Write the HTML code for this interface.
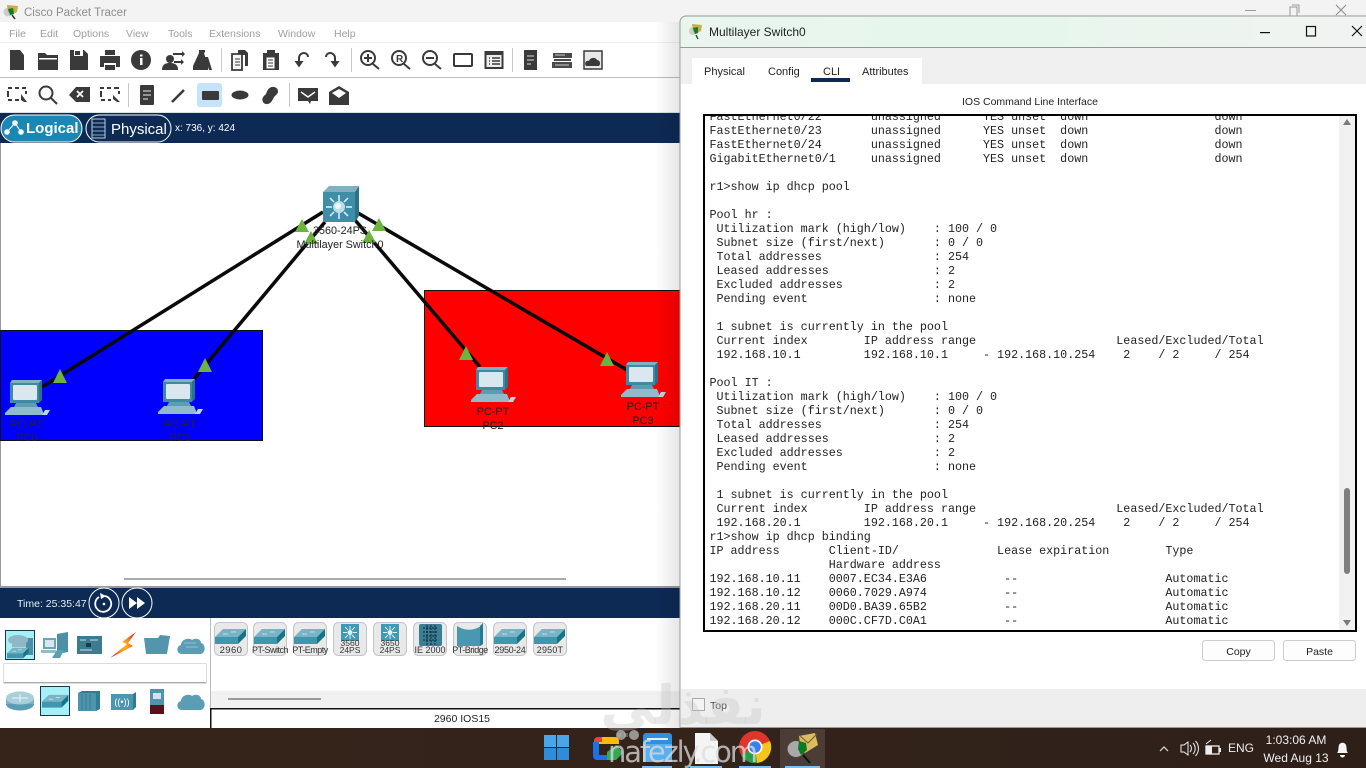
<!DOCTYPE html>
<html><head><meta charset="utf-8"><style>
html,body{margin:0;padding:0;width:1366px;height:768px;overflow:hidden;background:#fff}
svg{position:absolute;left:0;top:0;font-family:"Liberation Sans",sans-serif}
#cli{position:absolute;left:706px;top:116px;width:632px;height:514px;overflow:hidden}
#cli pre{position:absolute;left:3.500px;top:-6px;margin:0;font:11.7px/14px "Liberation Mono",monospace;color:#222}
</style></head><body>
<svg width="1366" height="768" viewBox="0 0 1366 768">
<defs>
<linearGradient id="sh" x1="0" x2="1"><stop offset="0" stop-color="#000" stop-opacity="0"/><stop offset="1" stop-color="#000" stop-opacity=".1"/></linearGradient>
<linearGradient id="tb" x1="0" x2="1"><stop offset="0" stop-color="#e9f5ee"/><stop offset=".5" stop-color="#e6f6ec"/><stop offset="1" stop-color="#f1f3f2"/></linearGradient>
<linearGradient id="task" x1="0" x2="1"><stop offset="0" stop-color="#36241a"/><stop offset=".5" stop-color="#33231b"/><stop offset="1" stop-color="#2e2019"/></linearGradient>
<radialGradient id="bolt"><stop offset="0" stop-color="#ffd21a"/><stop offset=".5" stop-color="#fb8a1a"/><stop offset="1" stop-color="#e8391a"/></radialGradient>
<g id="pc">
<path d="M5 3l2-3h30l-3 3z" fill="#7fb1c2"/>
<path d="M5 3h29v20H5z" fill="#3f8aa3"/><path d="M34 3l3-3v20l-3 3z" fill="#2b7187"/>
<rect x="8" y="5" width="24" height="15" rx="1" fill="#d8e8ee"/>
<path d="M11 23h20l2 4H9z" fill="#5d9cb2"/><path d="M6 27h30l2 5v3H0v-2z" fill="#8fbccd"/>
<path d="M37 35l3-5h5l-3 5z" fill="#b9d8e2"/>
</g>
<g id="sw">
<path d="M0 9L8 1h23l-8 8z" fill="#7ab3c4"/><path d="M0 9h23v7H0z" fill="#3e97ae"/><path d="M23 9l8-8v7l-8 8z" fill="#167488"/>
<path d="M8 6h5M16 4h5" stroke="#d8ecf2" stroke-width=".8"/>
</g>
<g id="ml">
<path d="M0 6L6 0h30l-4 6z" fill="#7fb1c2"/><path d="M32 6l4-6v30l-4 6z" fill="#2c7187"/>
<rect x="0" y="6" width="32" height="30" fill="#3f8ea8"/>
<g stroke="#e6f3f7" stroke-width="1.500"><path d="M16 9v6M16 27v6M3 21h6M23 21h6M7 12l4 4M25 12l-4 4M7 30l4-4M25 30l-4-4"/></g>
<circle cx="16" cy="21" r="6" fill="#bfdde6"/><circle cx="15" cy="20" r="3" fill="#eff8fb"/>
</g>
<g id="ml2">
<rect x="5" y="0" width="18" height="17" fill="#3f9ab5"/>
<g stroke="#e6f3f7" stroke-width="1"><path d="M14 2v4M14 11v4M7 8.500h4M17 8.500h4M9 3l3 3M19 3l-3 3M9 14l3-3M19 14l-3-3"/></g>
<circle cx="14" cy="8.500" r="2.500" fill="#dff0f5"/>
</g>
<g id="cld">
<path d="M5 19C-1 19-1 11 4 10c0-5 7-8 11-5 5-3 9 0 9 3 5 1 5 11-1 11z" fill="#5b9db4"/>
</g>
<g id="tile"><rect x=".5" y=".5" width="33" height="33" rx="5" fill="#e9e9e9" stroke="#c6c6c6"/></g>
</defs>

<rect width="1366" height="768" fill="#fff"/>
<rect width="1366" height="22" fill="#f3f3f3"/>
<rect y="42" width="680" height="1" fill="#eee"/>
<g transform="translate(3,3)"><circle cx="5" cy="9" r="4.500" fill="#ccc"/><path d="M4 2l11 1-1 6-6 3-3-3z" fill="#c9ad4c"/><path d="M5 6l5-1 1 6-4 1z" fill="#137a28"/><path d="M9 12l3 4" stroke="#333" stroke-width="1.500"/></g>
<text x="24" y="16" font-size="11.500" fill="#8d8d8d">Cisco Packet Tracer</text>
<g font-size="10.500" fill="#9e9e9e">
<text x="9" y="37">File</text><text x="40" y="37">Edit</text><text x="73" y="37">Options</text><text x="126" y="37">View</text><text x="168" y="37">Tools</text><text x="209" y="37">Extensions</text><text x="278" y="37">Window</text><text x="334" y="37">Help</text>
</g>
<rect y="77" width="680" height="1" fill="#bdbdbd"/>
<rect y="112" width="680" height="1" fill="#d8e2e8"/>

<g fill="#3a3a3a">
<path d="M10 50h10l4 5v15H10z"/>
<path d="M38 53h7l2 2h11v15H38z"/><rect x="39" y="58" width="18" height="1.500" fill="#fff"/>
<path d="M70 50h14l4 4v16H70z"/><rect x="74" y="50" width="9" height="6" fill="#fff"/><rect x="75" y="51" width="5" height="4"/>
<path d="M105 50h10v5h-10zM100 56h20v11h-4v-4h-12v4h-4zM105 65h10v5h-10z"/>
<circle cx="141" cy="60" r="10"/><rect x="140" y="58" width="2.500" height="7" fill="#fff"/><rect x="140" y="54.500" width="2.500" height="2" fill="#fff"/>
<circle cx="170" cy="59" r="4"/><path d="M162 70c0-6 4-7 8-7s8 1 8 7z"/><path d="M173 53h9v-2l3 3-3 3v-2h-9zM174 61h7v-2l3 3-3 3v-2h-7z"/>
<path d="M199 50h6v2l-1 1 4 13v4h-15v-4l6-13zM205 57l3 0 4 13h-3z"/>
<path d="M238 50h7l3 3v13h-3V55h-7z"/><path d="M232 54h10v16h-10z" fill="#f5f5f5" stroke="#3a3a3a" stroke-width="1.800"/><path d="M235 59h5M235 62h5M235 65h5" stroke="#3a3a3a"/>
<path d="M263 53h4v-3h8v3h4v17h-16z"/><rect x="266" y="57" width="9" height="12" fill="#fff" stroke="#3a3a3a"/><path d="M268 60h5M268 63h5M268 66h5" stroke="#3a3a3a"/>
</g>
<path d="M299 62V58a5 5 0 0 1 5-5c2 0 4 1.500 4 4" fill="none" stroke="#3a3a3a" stroke-width="2"/><path d="M294.500 61h9l-4.500 6.500z" fill="#3a3a3a"/>
<path d="M335 62V58a5 5 0 0 0-5-5c-2 0-4 1.500-4 4" fill="none" stroke="#3a3a3a" stroke-width="2"/><path d="M330.500 61h9l-4.500 6.500z" fill="#3a3a3a"/>
<rect x="221" y="48" width="1" height="24" fill="#c8c8c8"/><rect x="351" y="48" width="1" height="24" fill="#c8c8c8"/><rect x="512" y="48" width="1" height="24" fill="#c8c8c8"/>
<g fill="none" stroke="#3a3a3a" stroke-width="2">
<circle cx="368" cy="58" r="7"/><path d="M373 64l6 5"/><path d="M364 58h8M368 54v8"/>
<circle cx="399" cy="58" r="7"/><path d="M404 64l6 5"/>
<circle cx="430" cy="58" r="7"/><path d="M435 64l6 5"/><path d="M426 58h8"/>
<rect x="454" y="54" width="18" height="12" rx="1"/>
</g>
<text x="396" y="62" font-size="10" font-weight="700" fill="#3a3a3a">R</text>
<rect x="484.500" y="51" width="19" height="18" fill="#3a3a3a"/><rect x="486.500" y="55" width="15" height="12" fill="#eee"/><path d="M489 58h1M489 61h1M489 64h1M492 58h8M492 61h8M492 64h8" stroke="#3a3a3a" stroke-width="1.500"/>
<rect x="524" y="50" width="13" height="20" fill="#3a3a3a"/><path d="M527 56h7M527 60h7M527 64h4" stroke="#ddd"/>
<path d="M553 53h19v5h-19zM554 59h17v2h-17zM552 62h20v6h-20z" fill="#4a4a4a"/><path d="M555 55h10M555 65h14" stroke="#ccc"/>
<rect x="584" y="51" width="18" height="18" fill="#e8e8e8" stroke="#3a3a3a" stroke-width="1.500"/><path d="M586 66c-2-3 0-6 3-5 1-4 7-4 8-1 3 0 4 4 2 6z" fill="#3a3a3a"/>

<g fill="none" stroke="#3a3a3a" stroke-width="2">
<path d="M8 88h4M15 88h4M22 88h4M8 100h4M15 100h4M8 91v6M26 91v3"/><path d="M100 88h4M107 88h4M114 88h5M101 100h4M108 100h3M101 91v6M119 91v3"/>
<circle cx="46" cy="93" r="6.500"/><path d="M51 98l6 6"/>
<path d="M172 102l12-12" stroke-width="2.500"/>
</g>
<path d="M21 94l6 8-3 0-3-2z" fill="#3a3a3a"/><path d="M113 95l7 7-3 0-4-3z" fill="#3a3a3a"/>
<path d="M76 87h14v15H76l-7-7z" fill="#3a3a3a"/><path d="M77 91l6 6M83 91l-6 6" stroke="#fff" stroke-width="1.800"/>
<rect x="128" y="83" width="1" height="24" fill="#c8c8c8"/><rect x="289" y="83" width="1" height="24" fill="#c8c8c8"/>
<rect x="140" y="85" width="14" height="20" rx="1" fill="#3a3a3a"/><path d="M143 91h8M143 95h8M143 99h5" stroke="#eee"/>
<rect x="197" y="83" width="25" height="24" rx="3" fill="#c6e4f9"/><rect x="202" y="91" width="17" height="9" rx="1" fill="#3a3a3a"/>
<ellipse cx="240" cy="95" rx="8.500" ry="4.500" fill="#3a3a3a"/>
<path d="M263 102c-2-4 1-6 3-8 1-3 3-8 8-7 5 1 5 6 2 8-3 2-3 6-6 8-3 2-6 1-7-1z" fill="#3a3a3a"/>
<path d="M298 88h20v13h-7l-1 3-2-3h-10z" fill="#3a3a3a"/><path d="M301 92l7 5 7-5" fill="none" stroke="#fff" stroke-width="1.500"/>
<path d="M329 92l10-6 10 6v13h-20z" fill="#3a3a3a"/><path d="M332 93l7-4 7 4-7 5z" fill="#fff"/>

<rect y="113" width="680" height="30" fill="#0d2a55"/>
<rect x="1" y="115" width="81" height="27" rx="13.500" fill="#1b87b4" stroke="#fff"/>
<rect x="86" y="115" width="85" height="27" rx="13.500" fill="#0d2a55" stroke="#fff"/>
<g fill="#fff"><circle cx="15" cy="123" r="2.800"/><circle cx="7" cy="132" r="2.800"/><circle cx="21" cy="132" r="2.800"/></g><path d="M15 123l-8 9M15 123l6 9" stroke="#fff"/>
<text x="26" y="133" font-size="15" font-weight="700" fill="#fff">Logical</text>
<rect x="92" y="119" width="13" height="19" fill="none" stroke="#bcd"/><path d="M92 123h13M92 127h13M92 131h13M92 135h13" stroke="#bcd" stroke-width=".7"/>
<text x="111" y="134" font-size="15" fill="#fff">Physical</text>
<text x="175" y="131" font-size="10" fill="#fff">x: 736, y: 424</text>

<rect y="143" width="680" height="444" fill="#fff"/>
<rect y="143" width="1" height="444" fill="#999"/>
<rect x=".5" y="330.500" width="262" height="110" fill="#00f" stroke="#111"/>
<rect x="424.500" y="290.500" width="262" height="136" fill="#f00" stroke="#111"/>
<g stroke="#0a0a0a" stroke-width="3.500" fill="none">
<path d="M323 212L42 387"/><path d="M325 222L193 380"/><path d="M355 220L480 367"/><path d="M358 213L627 370"/>
</g>
<use href="#pc" x="5" y="380"/><use href="#pc" x="158" y="379"/><use href="#pc" x="471" y="367"/><use href="#pc" x="621" y="362"/>
<use href="#ml" x="323" y="186"/>
<g fill="#6db33f">
<path d="M302 219l7 13h-14z"/><path d="M311 231l7 13h-14z"/><path d="M379 218l7 13h-14z"/><path d="M369 230l7 13h-14z"/>
<path d="M60 369l7 14h-14z"/><path d="M205 358l7 14h-14z"/><path d="M466 346l7 14h-14z"/><path d="M607 352l7 14h-14z"/>
</g>
<g font-size="10.800" fill="#222" text-anchor="middle">
<text x="340" y="234">3560-24PS</text><text x="340" y="248">Multilayer Switch0</text>
<text x="27" y="428">PC-PT</text><text x="27" y="441">PC0</text>
<text x="180" y="428">PC-PT</text><text x="180" y="441">PC1</text>
<text x="493" y="415">PC-PT</text><text x="493" y="429">PC2</text>
<text x="643" y="410">PC-PT</text><text x="643" y="424">PC3</text>
</g>
<rect x="124" y="578" width="442" height="2" fill="#aaa"/>
<rect y="586" width="680" height="2" fill="#999"/>

<rect y="588" width="680" height="30" fill="#0d2a55"/>
<text x="17" y="607" font-size="10.500" fill="#e8eef5">Time: 25:35:47</text>
<circle cx="104" cy="603" r="15" fill="none" stroke="#fff"/><circle cx="137" cy="603" r="15" fill="none" stroke="#fff"/>
<path d="M99 597a8 8 0 1 0 6-1" fill="none" stroke="#fff" stroke-width="1.800"/><path d="M100 593l6 3-5 3z" fill="#fff"/><circle cx="104" cy="604" r="1.300" fill="#fff"/>
<path d="M129 597l8 6-8 6zM137 597l8 6-8 6z" fill="#fff"/>

<rect x="210" y="618" width="1" height="110" fill="#bbb"/>
<rect x="5.500" y="630.500" width="29" height="29" fill="#a4f0f6" stroke="#143a50"/>
<rect x="26" y="638" width="7" height="17" fill="#4d8fa6"/>
<ellipse cx="18" cy="640" rx="10" ry="5" fill="#8fb8c6"/><rect x="12" y="642" width="14" height="5" fill="#8fb8c6"/>
<use href="#sw" transform="translate(7,647) scale(.7,.7)"/>
<rect x="43" y="638" width="13" height="11" fill="#6fa4b6"/><rect x="45" y="640" width="9" height="7" fill="#d8e8ee"/><path d="M41 650h15v3H41z" fill="#8fbccd"/>
<path d="M57 634l11-2v20l-11 2z" fill="#4d8fa6"/><path d="M52 658l5-8h7l-4 8z" fill="#5d9cb2"/>
<rect x="77" y="636" width="25" height="18" fill="#3c7c90"/><path d="M80 640h6M90 640h8M80 650h12" stroke="#c8e0e8"/><rect x="86" y="643" width="5" height="4" fill="#1b3a48"/>
<path d="M136 632l-14 10 5 2-17 14 23-12-5-3z" fill="url(#bolt)"/>
<path d="M144 638h14l2-3 10 1-3 18h-21z" fill="#5595ab"/>
<use href="#cld" transform="translate(177,635)"/><path d="M184 643h12M186 647h12" stroke="#8ec1d1"/>
<rect x="3.500" y="663.500" width="203" height="20" rx="1" fill="#fff" stroke="#ddd"/><rect x="4" y="682" width="202" height="1" fill="#aaa"/>
<ellipse cx="20" cy="704" rx="14" ry="6.500" fill="#5b9db4"/><rect x="6" y="698" width="28" height="6" fill="#7ab0c2"/><ellipse cx="20" cy="698" rx="14" ry="6.500" fill="#a9cfdb"/><path d="M12 698h16M20 694v8" stroke="#eaf5f8"/>
<rect x="40.500" y="686.500" width="29" height="29" fill="#a4f0f6" stroke="#143a50"/><use href="#sw" transform="translate(42,694) scale(.85,.85)"/>
<rect x="78" y="693" width="18" height="18" fill="#4d95ad"/><path d="M96 693l4-2v18l-4 2zM78 693l4-2h18l-4 2z" fill="#2f7c93"/><path d="M82 694v16M86 694v16M90 694v16" stroke="#387d94"/>
<rect x="111" y="694" width="22" height="16" fill="#4b97ae"/><path d="M133 694l3-2v15l-3 3z" fill="#2f7c93"/><text x="122" y="705" font-size="9" fill="#fff" text-anchor="middle">((•))</text>
<rect x="150" y="689" width="14" height="16" fill="#4d95ad"/><rect x="150" y="705" width="14" height="9" fill="#58101a"/><rect x="153" y="693" width="8" height="6" fill="#dde"/>
<use href="#cld" transform="translate(177,691)"/>

<use href="#tile" x="214" y="622"/><use href="#tile" x="253" y="622"/><use href="#tile" x="293" y="622"/><use href="#tile" x="333" y="622"/><use href="#tile" x="373" y="622"/><use href="#tile" x="413" y="622"/><use href="#tile" x="453" y="622"/><use href="#tile" x="493" y="622"/><use href="#tile" x="533" y="622"/>
<use href="#sw" x="215" y="628"/><use href="#sw" x="254" y="628"/><use href="#sw" x="294" y="628"/>
<use href="#ml2" x="336" y="624"/><use href="#ml2" x="376" y="624"/>
<rect x="419" y="624" width="23" height="22" rx="2" fill="#3a7f96"/><path d="M423 628h15M423 632h15M423 636h15M423 640h15M427 625v20M431 625v20M435 625v20" stroke="#123" stroke-dasharray="2 1"/>
<path d="M457 626c8 5 16 5 24 0l2-2v20l-3 2h-23z" fill="#4a98b0"/><path d="M480 626l3-3v21l-3 2z" fill="#217d95"/>
<use href="#sw" x="494" y="628"/><use href="#sw" x="534" y="628"/>
<g font-size="9" fill="#333" text-anchor="middle">
<text x="231" y="653" font-size="9.500" letter-spacing=".4">2960</text>
<text x="270" y="653" letter-spacing="-.5">PT-Switch</text>
<text x="310" y="653" letter-spacing="-.5">PT-Empty</text>
<text x="350" y="646" font-size="8.500">3560</text><text x="350" y="653" font-size="8.500">24PS</text>
<text x="390" y="646" font-size="8.500">3650</text><text x="390" y="653" font-size="8.500">24PS</text>
<text x="430" y="653">IE 2000</text>
<text x="470" y="653" letter-spacing="-.5">PT-Bridge</text>
<text x="510" y="653" letter-spacing="-.3">2950-24</text>
<text x="550" y="653" letter-spacing=".2">2950T</text>
</g>
<rect x="211" y="691" width="469" height="17" fill="#f1f1f1"/>
<rect x="228" y="698" width="93" height="2" fill="#9a9a9a"/>
<rect x="210" y="708" width="470" height="1.500" fill="#111"/>
<rect x="210" y="708" width="1.500" height="20" fill="#111"/>
<text x="462" y="722" font-size="10.500" fill="#222" text-anchor="middle">2960 IOS15</text>

<rect x="1245" y="10" width="11" height="1" fill="#999"/>
<rect x="1290" y="7" width="7" height="9" fill="none" stroke="#999"/><path d="M1292 5h7v8" fill="none" stroke="#999"/>
<path d="M1336 5l10 10M1346 5l-10 10" stroke="#888"/>

<rect x="655" y="22" width="25" height="706" fill="url(#sh)"/>

<rect x="680" y="17" width="686" height="711" fill="#fff"/>
<path d="M680 728V22a6 6 0 016-6h680v31H680z" fill="url(#tb)"/>
<path d="M680 728V22a6 6 0 016-6h680" fill="none" stroke="#9a9a9a"/>
<rect x="680" y="47" width="686" height="1" fill="#999"/>
<rect x="681" y="48" width="685" height="36" fill="#f0f0f0"/>
<rect x="692" y="58" width="230" height="26" fill="#fff"/>
<rect x="681" y="689" width="685" height="38" fill="#eee"/>
<rect x="680" y="727" width="686" height="2" fill="#999"/>
<g transform="translate(688,23)"><circle cx="5" cy="8" r="4" fill="#ccc"/><path d="M4 1l10 1-1 6-6 3-2-3z" fill="#c9ad4c"/><path d="M5 5l5-1 0 6-3 1z" fill="#137a28"/><path d="M8 12l2 4" stroke="#333" stroke-width="1.300"/></g>
<text x="709" y="36" font-size="12" fill="#222">Multilayer Switch0</text>
<rect x="1260" y="32" width="10" height="1.200" fill="#111"/>
<rect x="1306.500" y="26.500" width="9" height="9.500" fill="none" stroke="#111" stroke-width="1.200"/>
<path d="M1352 26l10 10M1362 26l-10 10" stroke="#111" stroke-width="1.200"/>
<g font-size="11" fill="#222">
<text x="704" y="75">Physical</text><text x="768" y="75">Config</text><text x="823" y="75">CLI</text><text x="862" y="75">Attributes</text>
</g>
<rect x="811" y="78" width="39" height="4" fill="#0d2a55"/>
<text x="1030" y="105" font-size="10.500" fill="#222" text-anchor="middle">IOS Command Line Interface</text>
<rect x="704" y="115" width="652" height="516" fill="#fff" stroke="#000" stroke-width="2"/>
<rect x="1339" y="116" width="16" height="514" fill="#f1f1f1"/>
<path d="M1347 119l4 6h-8z" fill="#7a7a7a"/><path d="M1343 620h8l-4 6z" fill="#7a7a7a"/>
<rect x="1344" y="488" width="6" height="86" rx="3" fill="#7f7f7f"/>
<rect x="1202.500" y="640.500" width="72" height="20" rx="3" fill="#fdfdfd" stroke="#ccc"/>
<rect x="1283.500" y="640.500" width="72" height="20" rx="3" fill="#fdfdfd" stroke="#ccc"/>
<text x="1238.500" y="655" font-size="10.500" fill="#222" text-anchor="middle">Copy</text>
<text x="1319.500" y="655" font-size="10.500" fill="#222" text-anchor="middle">Paste</text>
<rect x="692.500" y="698.500" width="12" height="12" fill="#f4f4f4" stroke="#aaa"/>
<text x="710" y="709" font-size="10.500" fill="#444">Top</text>

<rect y="728" width="1366" height="40" fill="url(#task)"/>
<g fill="#4aa6ea"><rect x="544" y="735" width="12" height="12"/><rect x="557" y="735" width="12" height="12"/><rect x="544" y="748" width="12" height="12" fill="#2f8bdb"/><rect x="557" y="748" width="12" height="12" fill="#2f8bdb"/></g>
<path d="M598 741h18v3h-18z" fill="#fbbc04"/><path d="M600 737h15a4 4 0 014 4v3h-5v-2h-14z" fill="#fbbc04"/><path d="M594 741a4 4 0 014-4h4v5h-8z" fill="#ea4335"/>
<path d="M593 742h6v13h8v5h-10a4 4 0 01-4-4z" fill="#1a73e8"/><path d="M607 752l9-7 7 8-7 7h-9z" fill="#34a853"/>
<path d="M643 736a3 3 0 013-3h23a3 3 0 013 3v26h-29z" fill="#2f8fe0"/><path d="M643 744h29v18h-29z" fill="#58b0f0"/><rect x="647" y="738" width="21" height="2" fill="#dff0fb"/>
<path d="M695 733h15l8 8v23h-23z" fill="#f4f4f4"/><path d="M710 733v8h8z" fill="#ccc"/>
<circle cx="755" cy="747" r="16" fill="#e0352b"/><path d="M755 747L741 755a16 16 0 0 0 16 8z" fill="#2a9d46"/><path d="M755 747l2 16a16 16 0 0 0 13-22z" fill="#f6c51c"/><circle cx="755" cy="747" r="7.500" fill="#fff"/><circle cx="755" cy="747" r="5.800" fill="#3a80ea"/>
<rect x="780" y="729" width="45" height="39" fill="#4b3d36"/>
<ellipse cx="796" cy="749" rx="8.500" ry="8" fill="#a9a9a9"/><path d="M799 736l16-3 3 12-13 8-4-2z" fill="#d9bd60"/><path d="M800 736l8 7 9-9" fill="none" stroke="#6f5a1f"/><path d="M799 741l7 2 1 7-6 5-3-6z" fill="#0a7a24"/><path d="M803 755l7 8" stroke="#111" stroke-width="2"/>
<g fill="#7ec0ef"><rect x="642" y="766" width="30" height="2"/><rect x="690" y="766" width="32" height="2"/><rect x="739" y="766" width="32" height="2"/><rect x="785" y="766" width="35" height="2"/></g>
<path d="M1160 751l4-4 4 4" fill="none" stroke="#ddd" stroke-width="1.200"/>
<path d="M1181 745h3l4-3v13l-4-3h-3z" fill="none" stroke="#eee"/><path d="M1190 745a5 5 0 010 7M1193 743a8 8 0 010 11M1195.500 741a11 11 0 010 15" fill="none" stroke="#eee"/>
<rect x="1206" y="746" width="13" height="8" fill="none" stroke="#eee" stroke-width="1.300"/><rect x="1219" y="748" width="2" height="4" fill="#eee"/><path d="M1206 746h6v8h-6z" fill="#eee"/><path d="M1206 744l5-4" stroke="#eee"/>
<text x="1241" y="752" font-size="12" fill="#eee" text-anchor="middle">ENG</text>
<text x="1296" y="744" font-size="12" fill="#f0f0f0" text-anchor="middle">1:03:06 AM</text>
<text x="1296" y="762" font-size="12" fill="#f0f0f0" text-anchor="middle">Wed Aug 13</text>
<path d="M1337 753c2-2 1-5 2-8 1-3 6-3 7 0 1 3 0 6 2 8z" fill="#f4f4f4"/><path d="M1340 755h5a2.500 2.500 0 01-5 0z" fill="#f4f4f4"/>
</svg>

<div id="cli"><pre>FastEthernet0/22       unassigned      YES unset  down                  down
FastEthernet0/23       unassigned      YES unset  down                  down
FastEthernet0/24       unassigned      YES unset  down                  down
GigabitEthernet0/1     unassigned      YES unset  down                  down

r1&gt;show ip dhcp pool

Pool hr :
 Utilization mark (high/low)    : 100 / 0
 Subnet size (first/next)       : 0 / 0
 Total addresses                : 254
 Leased addresses               : 2
 Excluded addresses             : 2
 Pending event                  : none

 1 subnet is currently in the pool
 Current index        IP address range                    Leased/Excluded/Total
 192.168.10.1         192.168.10.1     - 192.168.10.254    2    / 2     / 254

Pool IT :
 Utilization mark (high/low)    : 100 / 0
 Subnet size (first/next)       : 0 / 0
 Total addresses                : 254
 Leased addresses               : 2
 Excluded addresses             : 2
 Pending event                  : none

 1 subnet is currently in the pool
 Current index        IP address range                    Leased/Excluded/Total
 192.168.20.1         192.168.20.1     - 192.168.20.254    2    / 2     / 254
r1&gt;show ip dhcp binding
IP address       Client-ID/              Lease expiration        Type
                 Hardware address
192.168.10.11    0007.EC34.E3A6           --                     Automatic
192.168.10.12    0060.7029.A974           --                     Automatic
192.168.20.11    00D0.BA39.65B2           --                     Automatic
192.168.20.12    000C.CF7D.C0A1           --                     Automatic</pre></div>

<svg width="1366" height="768" viewBox="0 0 1366 768" style="pointer-events:none">
<text x="683" y="724" font-size="54" font-weight="700" text-anchor="middle" fill="#c4c4c4" fill-opacity=".35" style="font-family:'DejaVu Sans',sans-serif">نفذلي</text>
<circle cx="621" cy="735" r="5" fill="#bbb" fill-opacity=".75"/><circle cx="634" cy="735" r="5" fill="#bbb" fill-opacity=".75"/>
<text x="608" y="762" font-size="29" fill="#ddd" fill-opacity=".75" style="font-family:'DejaVu Sans',sans-serif" textLength="150">nafezly.com</text>
</svg>
</body></html>
